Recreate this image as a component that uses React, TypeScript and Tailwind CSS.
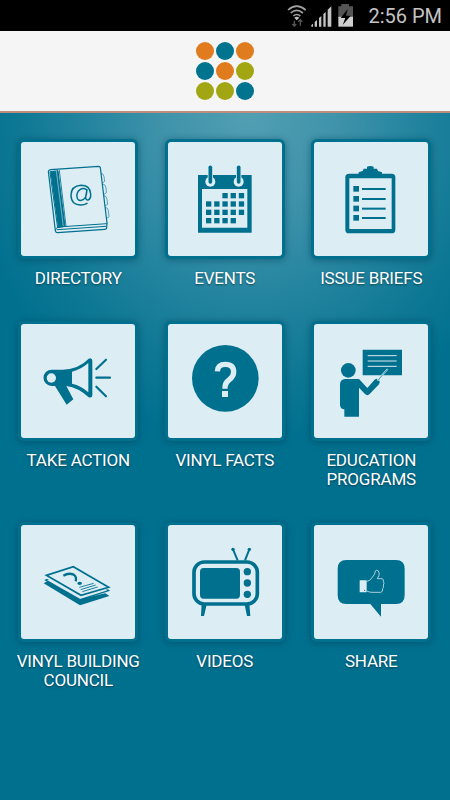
import type { ReactNode } from 'react';

const TEAL = '#00708f';
const PALE = '#dcedf4';

const LOGO_DOTS = [
  'bg-[#e07b1e]', 'bg-[#00738f]', 'bg-[#e07b1e]',
  'bg-[#00738f]', 'bg-[#e07b1e]', 'bg-[#a2a613]',
  'bg-[#a2a613]', 'bg-[#a2a613]', 'bg-[#00738f]',
];

function DirectoryIcon() {
  return (
    <g fill="none" stroke={TEAL} strokeWidth={3} strokeLinejoin="round" strokeLinecap="round">
      <path d="M115 118 Q116 114 122 113 L266 103 Q270 103 271 107 L291 273 L290 288 Q289 292 284 292 L143 302 Q137 302 136 296 Z" strokeWidth={3.6} />
      <path d="M121 119 L144 116 L165 283 L144 287 Z" fill={TEAL} />
      <path d="M139 117 L160 284" stroke={PALE} strokeWidth={1.6} />
      <path d="M148 115 L168 282" strokeWidth={2.5} />
      <path d="M136 296 Q137 287 145 285 L291 275 M142 293 L288 283" />
      <path d="M274 124 Q281 125 282 134 L284 148 L278 153 M279 156 Q287 157 288 168 L289 182 L282 187 M283 191 Q290 192 291 202 L293 217 L286 221 M287 226 Q294 227 295 236 L297 253 Q296 258 291 258" strokeWidth={1.8} />
      <path d="M229 173 Q220 166 210 173 Q199 181 201 195 Q203 207 214 205 Q226 202 229 188 L231 173 L227 195 Q227 205 234 204 Q243 201 242 186 Q240 160 213 160 Q183 162 183 190 Q184 220 213 219 Q223 219 231 214" strokeWidth={4.4} />
    </g>
  );
}

// 달력 날짜 칸: [행 y, 시작 열, 끝 열]
const CALENDAR_ROWS = [
  [183, 2, 4],
  [208, 0, 4],
  [233, 0, 4],
  [258, 0, 3],
];

function EventsIcon() {
  return (
    <g>
      <path d="M123 129H284V302H123Z" fill={TEAL} />
      <path d="M135 171H271V287H135Z" fill={PALE} />
      {[160, 245].map((x) => (
        <g key={x}>
          <circle cx={x} cy={149} r={15} fill={PALE} />
          <path d={`M${x} 106V138`} stroke={PALE} strokeWidth={16} />
          <path d={`M${x} 106V150`} stroke={TEAL} strokeWidth={11} strokeLinecap="round" />
        </g>
      ))}
      {CALENDAR_ROWS.map(([y, from, to]) =>
        [0, 1, 2, 3, 4]
          .filter((c) => c >= from && c <= to)
          .map((c) => <rect key={`${y}-${c}`} x={147 + c * 24.6} y={y} width={16} height={16} fill={TEAL} />)
      )}
    </g>
  );
}

function BriefsIcon() {
  return (
    <g>
      <rect x={125} y={125} width={150} height={179} rx={11} fill={TEAL} />
      <path d="M137 139H264V291H137Z" fill={PALE} />
      <path d="M165 128V121L177 117L180 110H190V104Q200 100 210 104V110H220L223 117L235 121V128Z" fill={TEAL} />
      {[171, 201, 230, 258].map((y) => (
        <g key={y} fill={TEAL}>
          <rect x={149} y={y - 9} width={17} height={17} />
          <rect x={175} y={y - 3} width={71} height={6} />
        </g>
      ))}
    </g>
  );
}

function ActionIcon() {
  return (
    <g>
      <path d="M125 167H158Q207 165 236 134Q246 129 247 140V244Q246 254 235 249Q205 221 169 216L190 256L170 272L135 216H125A24.5 24.5 0 0 1 125 167Z" fill={TEAL} />
      <circle cx={124} cy={192} r={14} fill={PALE} />
      <path d="M186 173Q212 167 235 147V235Q214 215 186 209Z" fill={PALE} />
      <path d="M259 165L288 137M259 191H300M259 218L288 247" stroke={TEAL} strokeWidth={6.5} strokeLinecap="round" />
    </g>
  );
}

function FactsIcon() {
  return (
    <g>
      <circle cx={205} cy={193} r={100} fill={TEAL} />
      <path d="M181 172Q182 151 205 151Q230 151 230 174Q230 187 217 197Q204 207 204 219V224" fill="none" stroke={PALE} strokeWidth={16} />
      <path d="M195 231H213V249H195Z" fill={PALE} />
    </g>
  );
}

function EducationIcon() {
  return (
    <g>
      <circle cx={134} cy={169} r={22} fill={TEAL} />
      <path d="M177 107H295V184H177Z" fill={TEAL} />
      <path d="M192 125H279M192 141H279M192 157H279" stroke={PALE} strokeWidth={3} />
      <path d="M124 195H166L191 222L213 197Q220 191 226 198Q231 204 226 211L198 240Q191 247 184 240L166 221V308H122V286Q109 284 109 272V211Q110 196 124 195Z" fill={TEAL} />
      <path d="M221 200L252 165" stroke={PALE} strokeWidth={5} />
      <path d="M222 200L252 165" stroke={TEAL} strokeWidth={2} />
    </g>
  );
}

function CouncilIcon() {
  return (
    <g strokeLinejoin="miter">
      <path d="M101 205L113 198L211 252L286 235L298 243L210 271Z" fill={TEAL} />
      <path d="M107 195L190 160L296 227L210 254Z" fill={PALE} stroke={TEAL} strokeWidth={4} />
      <path d="M107 188L190 158L296 222L210 246Z" fill={PALE} />
      <path d="M109 181L190 155L296 217L213 241Z" fill={PALE} stroke={TEAL} strokeWidth={5} />
      <path d="M160 182Q176 172 191 179Q201 186 197 199" fill="none" stroke={TEAL} strokeWidth={7} />
      <ellipse cx={209} cy={205} rx={7} ry={5} fill={TEAL} />
      <path d="M208 217L251 205M212 224L257 210M217 230L263 216" stroke={TEAL} strokeWidth={2.6} />
    </g>
  );
}

function VideosIcon() {
  return (
    <g>
      <path d="M242 136L228 103M264 136L277 103" stroke={TEAL} strokeWidth={6} />
      <circle cx={228} cy={103} r={5} fill={TEAL} />
      <circle cx={277} cy={103} r={5} fill={TEAL} />
      <path d="M134 265H150L141 303H132ZM262 265H277L280 303H270Z" fill={TEAL} />
      <rect x={111} y={141} width={190} height={126} rx={31} fill={PALE} stroke={TEAL} strokeWidth={11} />
      <rect x={129} y={159} width={120} height={92} rx={11} fill={TEAL} />
      {[170, 204, 238].map((y) => (
        <circle key={y} cx={271} cy={y} r={11} fill={TEAL} />
      ))}
    </g>
  );
}

function ShareIcon() {
  return (
    <g>
      <path d="M128 135H277Q303 135 303 161V241Q303 267 277 267H232V305L200 267H128Q102 267 102 241V161Q102 135 128 135Z" fill={TEAL} />
      <path d="M168 196H189V232H168Z" fill={PALE} />
      <circle cx={183} cy={226} r={2} fill={TEAL} />
      <path d="M190 199Q199 198 205 188L213 177L215 168Q219 163 224 168Q228 173 226 181L221 191H235Q241 193 239 199Q243 205 239 210Q241 218 237 221Q238 231 231 232H205Q197 232 190 228" fill="none" stroke={PALE} strokeWidth={2.3} strokeLinejoin="round" />
    </g>
  );
}

interface MenuItem {
  label: string;
  icon: ReactNode;
}

const MENU: MenuItem[] = [
  { label: 'DIRECTORY', icon: <DirectoryIcon /> },
  { label: 'EVENTS', icon: <EventsIcon /> },
  { label: 'ISSUE BRIEFS', icon: <BriefsIcon /> },
  { label: 'TAKE ACTION', icon: <ActionIcon /> },
  { label: 'VINYL FACTS', icon: <FactsIcon /> },
  { label: 'EDUCATION PROGRAMS', icon: <EducationIcon /> },
  { label: 'VINYL BUILDING COUNCIL', icon: <CouncilIcon /> },
  { label: 'VIDEOS', icon: <VideosIcon /> },
  { label: 'SHARE', icon: <ShareIcon /> },
];

function StatusBar() {
  return (
    <div className="flex h-[31px] items-center justify-end bg-black pr-2">
      {/* 와이파이, 신호, 배터리 */}
      <svg className="h-[31px] w-[74px]" viewBox="0 0 222 93" fill="none">
        <path d="M9 30Q35 7 62 30M17 39Q35 23 54 39M25 48Q35 39 46 48" stroke="#a3a3a3" strokeWidth={5} />
        <path d="M28 53Q35 48 43 53L35 61Z" fill="#c4c4c4" />
        <path d="M28 78V62M22 72L28 78L34 72M46 59V77M40 65L46 59L52 65" stroke="#555" strokeWidth={4} />
        <path d="M79 80V75L84 71V80ZM89 80V66L96 60V80ZM102 80V54L109 48V80ZM115 80V42L122 36V80ZM128 80V29L139 19V80Z" fill="#c4c4c4" />
        <path d="M160 19H169V12H192V19H204V50H160Z" fill="#555" />
        <path d="M160 50H204V80H160Z" fill="#d0d0d0" />
        <path d="M188 27L167 54H181L173 75L197 47H183Z" fill="#000" />
      </svg>
      <span className="ml-[9px] text-[20px] leading-none text-[#c4c4c4]">2:56 PM</span>
    </div>
  );
}

function MenuTile({ label, icon, originX }: MenuItem & { originX: number }) {
  return (
    <button className="flex flex-col items-center">
      <span className="rounded-[6px] bg-[#00708f] p-[3px] shadow-[0_1px_6px_1px_rgba(0,65,88,0.45)]">
        <svg className="block size-[114px] rounded-[3px] bg-[#dcedf4]" viewBox={`${originX} 30 342 342`}>
          {icon}
        </svg>
      </span>
      <span className="mt-[10px] w-[130px] text-center text-[17px] leading-[19px] tracking-[-0.2px] text-white [text-shadow:0_1px_2px_rgba(0,30,45,0.6)]">
        {label}
      </span>
    </button>
  );
}

export default function App() {
  return (
    <div className="flex h-[800px] w-[450px] flex-col overflow-hidden font-[Roboto,sans-serif]">
      <StatusBar />
      <header className="flex h-[82px] items-center justify-center border-b-2 border-[#bd8c7c] bg-[#f5f5f5]">
        <div className="grid grid-cols-3 gap-[2px]">
          {LOGO_DOTS.map((color, i) => (
            <span key={i} className={`size-[18px] rounded-full ${color}`} />
          ))}
        </div>
      </header>
      <main className="grid flex-1 grid-cols-3 content-start bg-[#00708f] bg-[radial-gradient(ellipse_290px_330px_at_250px_0px,#519fb3_0%,#3f93aa_30%,#2585a0_55%,#0e7894_80%,#00708f_100%)] pt-[26px] pr-[5.5px] pl-[5px] [grid-template-rows:182px_201px_auto]">
        {MENU.map((item, i) => (
          <MenuTile key={item.label} {...item} originX={i % 3 === 2 ? 31 : 33} />
        ))}
      </main>
    </div>
  );
}
